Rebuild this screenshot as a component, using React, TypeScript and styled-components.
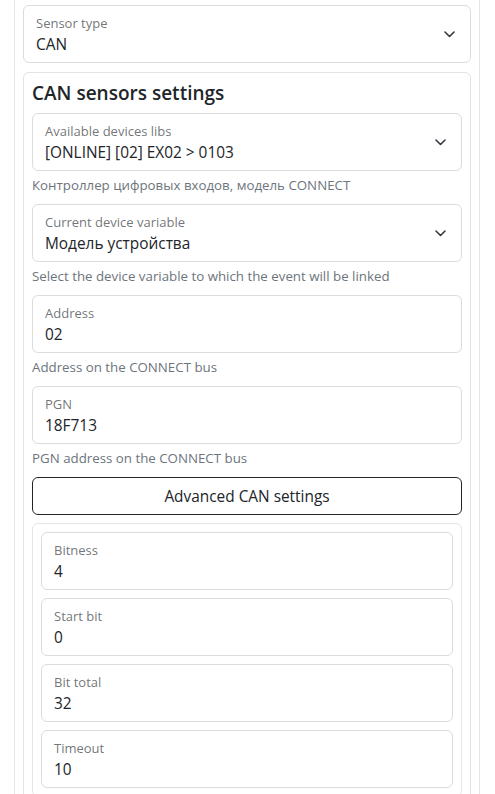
import styled, { createGlobalStyle } from "styled-components";

const GlobalStyle = createGlobalStyle`
  html, body {
    margin: 0;
    padding: 0;
    background: #fff;
  }
  body {
    font-family: "Open Sans", "Noto Sans", "Liberation Sans", sans-serif;
    color: #212529;
    font-size: 16px;
    line-height: 1.5;
  }
  * { box-sizing: border-box; }
`;

const Page = styled.div`
  padding: 0 15px 0 14px;
`;

const Panel = styled.div`
  border-left: 1px solid #e6e6e6;
  border-right: 1px solid #e6e6e6;
  padding: 5px 8px 0 8px;
  display: flex;
  flex-direction: column;
  gap: 9px;
  height: 794px;
  overflow: hidden;

  & > * {
    flex-shrink: 0;
  }
`;

const Card = styled.div`
  border: 1px solid #e3e3e3;
  border-radius: 6px;
  padding: 8px;
  display: flex;
  flex-direction: column;
`;

const Heading = styled.h5`
  margin: 0 0 8px 0;
  font-size: 19px;
  font-weight: 600;
  line-height: 24px;
`;

const FieldBox = styled.div<{ $select?: boolean }>`
  position: relative;
  flex-shrink: 0;
  height: 58px;
  border: 1px solid #dcdcdc;
  border-radius: 6px;
  background: #fff;
  padding: 7px ${(p) => (p.$select ? "36px" : "12px")} 0 12px;
  display: flex;
  flex-direction: column;
`;

const FieldLabel = styled.div`
  font-size: 13px;
  line-height: 20px;
  color: rgba(33, 37, 41, 0.65);
  white-space: nowrap;
`;

const FieldValue = styled.div`
  font-size: 15.4px;
  line-height: 24px;
  color: #212529;
  white-space: nowrap;
`;

const Chevron = styled.svg`
  position: absolute;
  right: 15px;
  top: 25px;
  width: 11px;
  height: 7px;
`;

const HelpText = styled.div`
  margin: 4px 0 8px 0;
  font-size: 13.3px;
  line-height: 21px;
  color: #6c757d;
  white-space: nowrap;
`;

const OutlineButton = styled.button`
  height: 38px;
  width: 100%;
  border: 1px solid #212529;
  border-radius: 6px;
  background: #fff;
  font-family: inherit;
  font-size: 15.4px;
  color: #212529;
  margin-bottom: 8px;
  cursor: pointer;
`;

const InnerCard = styled.div`
  border: 1px solid #e6e6e6;
  border-radius: 6px;
  padding: 8px;
  display: flex;
  flex-direction: column;
  gap: 8px;
`;

type FieldProps = { label: string; value: string; select?: boolean };

function Field({ label, value, select }: FieldProps) {
  return (
    <FieldBox $select={select}>
      <FieldLabel>{label}</FieldLabel>
      <FieldValue>{value}</FieldValue>
      {select && (
        <Chevron viewBox="0 0 11 7">
          <path
            d="M1 1l4.5 4.5L10 1"
            fill="none"
            stroke="#343a40"
            strokeWidth="1.6"
            strokeLinecap="round"
            strokeLinejoin="round"
          />
        </Chevron>
      )}
    </FieldBox>
  );
}

export default function App() {
  return (
    <>
      <GlobalStyle />
      <Page>
        <Panel>
          <Field label="Sensor type" value="CAN" select />
          <Card>
            <Heading>CAN sensors settings</Heading>
            <Field label="Available devices libs" value="[ONLINE] [02] EX02 > 0103" select />
            <HelpText>Контроллер цифровых входов, модель CONNECT</HelpText>
            <Field label="Current device variable" value="Модель устройства" select />
            <HelpText>Select the device variable to which the event will be linked</HelpText>
            <Field label="Address" value="02" />
            <HelpText>Address on the CONNECT bus</HelpText>
            <Field label="PGN" value="18F713" />
            <HelpText>PGN address on the CONNECT bus</HelpText>
            <OutlineButton type="button">Advanced CAN settings</OutlineButton>
            <InnerCard>
              <Field label="Bitness" value="4" />
              <Field label="Start bit" value="0" />
              <Field label="Bit total" value="32" />
              <Field label="Timeout" value="10" />
            </InnerCard>
          </Card>
        </Panel>
      </Page>
    </>
  );
}
